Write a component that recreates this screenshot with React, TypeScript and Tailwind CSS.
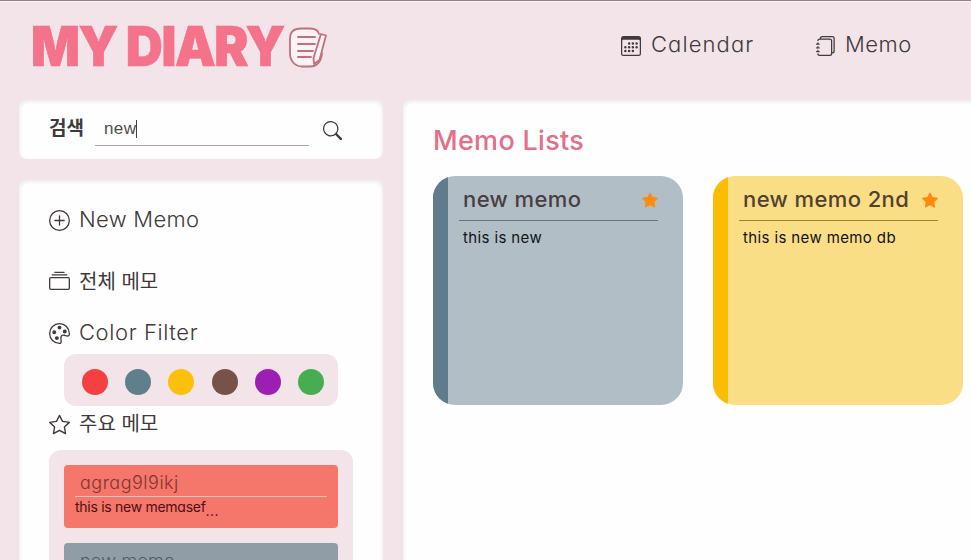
import React from 'react';
import {
  BsCalendar3,
  BsCollection,
  BsJournals,
  BsPalette,
  BsPlusCircle,
  BsSearch,
  BsStar,
  BsStarFill,
} from 'react-icons/bs';

const filterColors = ['bg-[#f44040]', 'bg-[#5f7f8c]', 'bg-[#fcc00a]', 'bg-[#765249]', 'bg-[#9c1fb3]', 'bg-[#47ad50]'];

function NotepadIcon() {
  return (
    <svg width="40" height="42" viewBox="0 0 40 42" fill="none" stroke="#c46f7d" strokeWidth="1.8" strokeLinecap="round" strokeLinejoin="round">
      <path d="M31 8C30 4 27 2.500 22 2.500H13C6 2.500 2 6 2 13v14c0 8 5 13.500 12 13.500h8c8 0 11-6 12-13" fill="#fbf3f4" />
      <path d="M33 8l5 1.500L31.500 34l-5.500 4-.5-6L33 8z" fill="#fbf3f4" />
      <path d="M10 11h17M10 18h17M10 25h15M10 31h13" />
    </svg>
  );
}

function MenuRow({ icon, children, className }: { icon: React.ReactNode; children: React.ReactNode; className: string }) {
  return (
    <div className={`flex h-8 items-center gap-[9px] whitespace-nowrap ${className}`}>
      <span className="mt-[3px] text-[21px]">{icon}</span>
      {children}
    </div>
  );
}

function MemoCard({ title, body, stripe, color, line, titleClass }: { title: string; body: string; stripe: string; color: string; line: string; titleClass: string }) {
  return (
    <article className={`flex h-[229px] w-[250px] shrink-0 overflow-hidden rounded-[22px] ${color}`}>
      <div className={`w-[15px] shrink-0 ${stripe}`} />
      <div className="pl-[11px]">
        <div className={`flex h-[45px] w-[199px] items-center justify-between border-b pl-1 ${line}`}>
          <h2 className={`whitespace-nowrap pt-[2px] text-[22px] font-medium ${titleClass}`}>{title}</h2>
          <BsStarFill className="mt-[3px] text-[16px] text-[#ff8a0c]" />
        </div>
        <p className="pl-[4px] pt-[6px] text-[15px] leading-[22px] tracking-[0.38px] text-[#101318]">{body}</p>
      </div>
    </article>
  );
}

export default function App() {
  return (
    <div className="flex h-[560px] w-[971px] flex-col overflow-hidden border-t border-[#927f88] bg-[#f2e4e8] text-[#41393d] [font-family:Inter,'Noto_Sans_CJK_KR',sans-serif] [font-feature-settings:'cv11']">
      <header className="flex h-[98px] shrink-0 items-start border-t border-[#fbf5f7] pl-[31px]">
        <h1 className="mt-[14px] h-[60px] w-[257px] origin-left scale-x-[0.932] whitespace-nowrap text-[55px] font-black leading-[60px] tracking-[-1.500px] text-[#f4728a] [-webkit-text-stroke:0.7px_#f4728a]">MY DIARY</h1>
        <div className="mt-[24px]"><NotepadIcon /></div>
        <nav className="ml-[293px] mt-[26px] flex h-8 items-center whitespace-nowrap text-[22px] font-[350]">
          <a className="flex w-[195px] items-center gap-[10px] tracking-[1.100px]"><BsCalendar3 className="mt-[3px] text-[20px]" />Calendar</a>
          <a className="flex items-center gap-[9px] tracking-[0.500px]"><BsJournals className="mt-[3px] text-[20px]" />Memo</a>
        </nav>
      </header>
      <div className="flex gap-5 pl-[19px]">
        <aside className="flex w-[364px] shrink-0 flex-col gap-5">
          <section className="flex h-[60px] items-center rounded-[8px] bg-[#fefefe] pl-[30px] shadow-[inset_0_2px_4px_#e6e3e4]">
            <label className="w-[46px] whitespace-nowrap text-[19px] font-bold tracking-[-0.1px]">검색</label>
            <div className="flex h-[33px] w-[214px] items-center border-b border-[#aaa5a7] pl-[9px] pt-px [font-family:'Liberation_Sans',sans-serif]">
              <span className="text-[17px] tracking-[0.4px] text-[#514b4e]">new</span>
              <span className="h-[18px] w-px bg-[#443c40]" />
            </div>
            <BsSearch className="ml-[14px] mt-[2px] text-[19px]" />
          </section>
          <section className="h-[421px] rounded-[8px] bg-[#fefefe] pl-[30px] pt-[24px] text-[22px] font-[350] shadow-[inset_0_2px_4px_#e6e3e4]">
            <MenuRow icon={<BsPlusCircle />} className="tracking-[0.300px]">New Memo</MenuRow>
            <MenuRow icon={<BsCollection />} className="mt-[29px]"><span className="pt-[3px] text-[20px] font-normal">전체 메모</span></MenuRow>
            <MenuRow icon={<BsPalette />} className="mt-[20px] tracking-[0.600px]">Color Filter</MenuRow>
            <div className="ml-[15px] mt-[6px] flex h-[52px] w-[274px] items-center justify-between rounded-[12px] bg-[#f2e4e8] pl-[18px] pr-[14px] pt-1">
              {filterColors.map((color) => <span key={color} className={`size-[26px] rounded-full ${color}`} />)}
            </div>
            <MenuRow icon={<BsStar />} className="mt-[1px]"><span className="pt-[2px] text-[20px] font-normal">주요 메모</span></MenuRow>
            <div className="mt-[11px] h-[180px] w-[304px] rounded-[12px] bg-[#f2e4e8] px-[15px] pt-[15px]">
              <article className="h-[63px] rounded-[4px] bg-[#f5766b] px-[11px]">
                <h3 className="h-[32px] border-b border-[#f3c1b8] pl-[5px] text-[18px] leading-[35px] tracking-[0.500px] text-[#84332f]">agrag9l9ikj</h3>
                <p className="text-[14px] font-normal leading-[20px] tracking-[-0.280px] text-[#4c1110]">this is new memasef<span className="relative top-1 tracking-[0.500px]">...</span></p>
              </article>
              <article className="mt-[15px] h-[63px] rounded-[4px] bg-[#909da6] px-[11px]">
                <h3 className="h-[32px] border-b border-[#c3cbd0] pl-[5px] text-[18px] leading-[35px] tracking-[0.250px] text-[#505b63]">new memo</h3>
              </article>
            </div>
          </section>
        </aside>
        <main className="h-[500px] w-[600px] shrink-0 rounded-[8px] bg-[#fefefe] pl-[30px] pt-[23px] shadow-[inset_0_2px_4px_#e6e3e4]">
          <h2 className="h-[54px] whitespace-nowrap text-[27px] font-medium leading-[38px] tracking-[0.300px] text-[#e46f87]">Memo Lists</h2>
          <div className="flex gap-[30px]">
            <MemoCard title="new memo" body="this is new" stripe="bg-[#5f7b8c]" color="bg-[#b1bec6]" line="border-b-[#66747f]" titleClass="text-[#493f43] tracking-[0.4px]" />
            <MemoCard title="new memo 2nd" body="this is new memo db" stripe="bg-[#fabc05]" color="bg-[#f9de86]" line="border-b-[#9c8338]" titleClass="text-[#54402f] tracking-[0.4px]" />
          </div>
        </main>
      </div>
    </div>
  );
}
